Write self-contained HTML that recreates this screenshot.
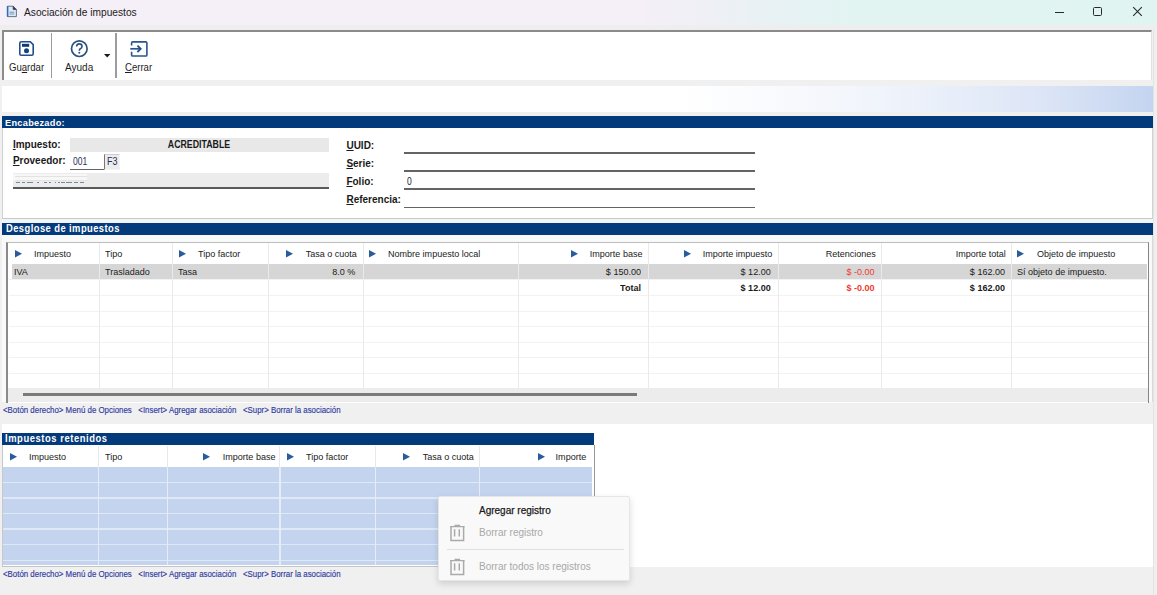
<!DOCTYPE html>
<html><head><meta charset="utf-8">
<style>
*{margin:0;padding:0;box-sizing:border-box}
html,body{width:1157px;height:595px;overflow:hidden;background:#f0f0f0;font-family:"Liberation Sans",sans-serif;color:#1a1a1a;position:relative}
.a{position:absolute}
.t{position:absolute;white-space:nowrap;line-height:1;color:#1a1a1a}
u{text-decoration:underline;text-underline-offset:1px}
svg{display:block}
</style></head><body>
<div class="a" style="left:0.0px;top:0.0px;width:1157.0px;height:25.0px;background:linear-gradient(90deg,#f5eff7 0px,#f5eff7 640px,#e9f1f4 760px,#e1f4f2 860px,#e0f4f2 1157px)"></div>
<div class="a" style="left:0.0px;top:25.0px;width:1157.0px;height:5.0px;background:#eeeeee"></div>
<svg class="a" style="left:6px;top:5px" width="12" height="13" viewBox="0 0 12 13"><path d="M1.5 1.2H7.2L10.4 4.4V11.6H1.5Z" fill="#dde9f6" stroke="#55657a" stroke-width="0.9"/><path d="M1.6 1.2V11.6" stroke="#2f6db4" stroke-width="1.6"/><path d="M7.2 1.2V4.4H10.4" fill="#3a3a48" stroke="#3a3a48" stroke-width="0.8"/><path d="M3.6 7.2H8.2M3.6 9H8.2" stroke="#5a7fae" stroke-width="0.8"/></svg>
<div class="t" style="left:24.0px;top:8.37px;font-size:10.2px;color:#1c1c1c">Asociación de impuestos</div>
<div class="a" style="left:1055.0px;top:12.0px;width:8.5px;height:1.1px;background:#2a2a2a"></div>
<div class="a" style="left:1093.3px;top:7.2px;width:8.8px;height:8.8px;border:1.15px solid #2a2a2a;border-radius:1.6px"></div>
<svg class="a" style="left:1132px;top:6px" width="11" height="11" viewBox="0 0 11 11"><path d="M1.2 1.2L9.8 9.8M9.8 1.2L1.2 9.8" stroke="#2a2a2a" stroke-width="1.1"/></svg>
<div class="a" style="left:2.0px;top:30.0px;width:1150.0px;height:50.0px;background:#fff;border-top:2px solid #8a8a8a;border-left:2px solid #8c8c8c;border-right:1px solid #e0e0e0"></div>
<div class="a" style="left:50.6px;top:33.0px;width:1.8px;height:45.0px;background:#9c9c9c"></div>
<div class="a" style="left:115.0px;top:33.0px;width:1.8px;height:45.0px;background:#9c9c9c"></div>
<svg class="a" style="left:19px;top:41px" width="15" height="15" viewBox="0 0 15 15"><path d="M2.2 0.8H11.3L14.2 3.7V12.8Q14.2 14.2 12.8 14.2H2.2Q0.8 14.2 0.8 12.8V2.2Q0.8 0.8 2.2 0.8Z" fill="#fff" stroke="#1f4f8c" stroke-width="1.6"/><rect x="3" y="2.8" width="7.2" height="3" fill="#0e3a78"/><circle cx="7.5" cy="9.8" r="2.5" fill="#12437f"/></svg>
<div class="t" style="left:8.7px;top:62.29px;font-size:11px;transform:scaleX(0.87);transform-origin:left top;color:#1e1e1e">Gu<u>a</u>rdar</div>
<svg class="a" style="left:70px;top:40px" width="19" height="18" viewBox="0 0 19 18"><circle cx="9.3" cy="8.7" r="7.8" fill="none" stroke="#2b527f" stroke-width="1.7"/><path d="M6.6 6.6Q6.6 3.9 9.3 3.9Q12 3.9 12 6.4Q12 7.9 10.3 8.8Q9.3 9.4 9.3 10.8" fill="none" stroke="#2b527f" stroke-width="1.6"/><circle cx="9.3" cy="12.8" r="1" fill="#2b527f"/></svg>
<svg class="a" style="left:104px;top:54px" width="7" height="4" viewBox="0 0 7 4"><path d="M0 0H6.4L3.2 3.6Z" fill="#1a1a1a"/></svg>
<div class="t" style="left:64.5px;top:62.09px;font-size:11px;transform:scaleX(0.91);transform-origin:left top;color:#1e1e1e">Ayuda</div>
<svg class="a" style="left:130px;top:41px" width="18" height="16" viewBox="0 0 18 16"><path d="M1.6 4.6V2Q1.6 0.9 2.7 0.9H15.8Q16.9 0.9 16.9 2V13.9Q16.9 15 15.8 15H2.7Q1.6 15 1.6 13.9V10.8" fill="none" stroke="#2a5590" stroke-width="1.6"/><path d="M0.3 7.8H10.2" stroke="#2a5590" stroke-width="1.7"/><path d="M7.4 4.6L10.7 7.8L7.4 11" fill="none" stroke="#1f4f8c" stroke-width="1.8"/></svg>
<div class="t" style="left:125.2px;top:62.09px;font-size:11px;transform:scaleX(0.87);transform-origin:left top;color:#1e1e1e"><u>C</u>errar</div>
<div class="a" style="left:2.0px;top:80.0px;width:1151.0px;height:6.0px;background:#f0f0f0"></div>
<div class="a" style="left:2.0px;top:86.0px;width:1151.0px;height:26.0px;background:linear-gradient(90deg,#fff 0px,#fff 680px,#f3f6fc 850px,#e8eef9 950px,#dbe4f6 1050px,#c4d4f0 1151px)"></div>
<div class="a" style="left:2.0px;top:116.0px;width:1151.0px;height:12.0px;background:#033a7c"></div>
<div class="t" style="left:5.2px;top:118.20px;font-size:9.8px;transform:scaleX(0.94);transform-origin:left top;color:#fff;font-weight:bold;letter-spacing:0.3px">Encabezado:</div>
<div class="a" style="left:2.0px;top:217.0px;width:1151.0px;height:5.5px;background:#f1f4f8"></div>
<div class="a" style="left:2.0px;top:128.0px;width:1151.0px;height:90.5px;background:#fff;border:1px solid #d2d2d2;border-bottom:1.5px solid #c8c8c8;border-top:none"></div>
<div class="t" style="left:12.9px;top:140.13px;font-size:10px;font-weight:bold;color:#1a1a1a"><u>I</u>mpuesto:</div>
<div class="a" style="left:69.7px;top:138.0px;width:259.1px;height:13.7px;background:#e8e8e8"></div>
<div class="t" style="left:-1.0px;width:400px;text-align:center;top:140.23px;font-size:10px;transform:scaleX(0.88);transform-origin:center top;font-weight:bold;color:#1a1a1a">ACREDITABLE</div>
<div class="t" style="left:12.9px;top:156.44px;font-size:10px;font-weight:bold;color:#1a1a1a"><u>P</u>roveedor:</div>
<div class="a" style="left:69.7px;top:153.0px;width:34.8px;height:17.0px;background:#fff;border-bottom:1.6px solid #646464"></div>
<div class="t" style="left:72.7px;top:157.03px;font-size:10px;transform:scaleX(0.85);transform-origin:left top;color:#1f2f55">001</div>
<div class="a" style="left:103.6px;top:154.3px;width:16.3px;height:15.7px;background:#ececec;border-top:1px solid #cdcdcd;border-left:1.4px solid #777;border-right:1px solid #f4f4f4;border-bottom:1px solid #f4f4f4"></div>
<div class="t" style="left:106.8px;top:157.03px;font-size:10px;transform:scaleX(0.9);transform-origin:left top;color:#1f2f55">F3</div>
<div class="a" style="left:12.6px;top:173.3px;width:316.2px;height:15.3px;background:#ececec;border-bottom:2px solid #5a5a5a"></div>
<div class="a" style="left:13.2px;top:173.6px;width:74.3px;height:7.9px;background:#f7f7f7"></div>
<div class="a" style="left:14.5px;top:176.0px;width:72.0px;height:1.0px;background:#e2e2e2"></div>
<div class="a" style="left:14.5px;top:179.6px;width:72.0px;height:1.0px;background:#e4e4e4"></div>
<div class="a" style="left:15.5px;top:181.8px;width:4.4px;height:1.6px;background:#7886a6"></div>
<div class="a" style="left:21.5px;top:181.8px;width:3.2px;height:1.6px;background:#7886a6"></div>
<div class="a" style="left:27.0px;top:181.8px;width:6.4px;height:1.6px;background:#7886a6"></div>
<div class="a" style="left:37.0px;top:181.8px;width:2.4px;height:1.6px;background:#7886a6"></div>
<div class="a" style="left:43.8px;top:181.8px;width:3.2px;height:1.6px;background:#7886a6"></div>
<div class="a" style="left:49.0px;top:181.8px;width:2.3px;height:1.6px;background:#7886a6"></div>
<div class="a" style="left:54.5px;top:181.8px;width:1.2px;height:1.6px;background:#7886a6"></div>
<div class="a" style="left:57.7px;top:181.8px;width:2.0px;height:1.6px;background:#7886a6"></div>
<div class="a" style="left:61.3px;top:181.8px;width:3.5px;height:1.6px;background:#7886a6"></div>
<div class="a" style="left:66.0px;top:181.8px;width:6.0px;height:1.6px;background:#7886a6"></div>
<div class="a" style="left:73.6px;top:181.8px;width:4.0px;height:1.6px;background:#7886a6"></div>
<div class="a" style="left:79.5px;top:181.8px;width:4.0px;height:1.6px;background:#7886a6"></div>
<div class="t" style="left:346.4px;top:140.73px;font-size:10px;font-weight:bold;color:#1a1a1a"><u>U</u>UID:</div>
<div class="a" style="left:404.3px;top:152.2px;width:351.0px;height:1.6px;background:#646464"></div>
<div class="t" style="left:346.4px;top:159.03px;font-size:10px;font-weight:bold;color:#1a1a1a"><u>S</u>erie:</div>
<div class="a" style="left:404.3px;top:170.3px;width:351.0px;height:1.6px;background:#646464"></div>
<div class="t" style="left:346.4px;top:176.83px;font-size:10px;font-weight:bold;color:#1a1a1a"><u>F</u>olio:</div>
<div class="a" style="left:404.3px;top:188.3px;width:351.0px;height:1.6px;background:#646464"></div>
<div class="t" style="left:346.4px;top:195.03px;font-size:10px;font-weight:bold;color:#1a1a1a"><u>R</u>eferencia:</div>
<div class="a" style="left:404.3px;top:206.8px;width:351.0px;height:1.6px;background:#646464"></div>
<div class="t" style="left:407.3px;top:177.13px;font-size:10px;transform:scaleX(0.85);transform-origin:left top;color:#1a1a1a">0</div>
<div class="a" style="left:2.0px;top:222.5px;width:1151.0px;height:12.0px;background:#033a7c"></div>
<div class="t" style="left:5.6px;top:224.44px;font-size:10px;transform:scaleX(0.94);transform-origin:left top;color:#fff;font-weight:bold;letter-spacing:0.45px">Desglose de impuestos</div>
<div class="a" style="left:2.0px;top:234.5px;width:1150.5px;height:167.5px;background:#f9f9f9;border-right:1px solid #dadada"></div>
<div class="a" style="left:6.0px;top:241.5px;width:1143.2px;height:161.0px;background:#fff;border-top:1.5px solid #bdbdbd;border-left:2px solid #8a8a8a;border-right:1.2px solid #858585"></div>
<div class="a" style="left:11.8px;top:263.9px;width:1135.2px;height:15.1px;background:#d6d6d6"></div>
<div class="a" style="left:8.5px;top:294.9px;width:1139.5px;height:1.0px;background:#f2f2f2"></div>
<div class="a" style="left:8.5px;top:310.5px;width:1139.5px;height:1.0px;background:#f2f2f2"></div>
<div class="a" style="left:8.5px;top:326.1px;width:1139.5px;height:1.0px;background:#f2f2f2"></div>
<div class="a" style="left:8.5px;top:341.6px;width:1139.5px;height:1.0px;background:#f2f2f2"></div>
<div class="a" style="left:8.5px;top:357.2px;width:1139.5px;height:1.0px;background:#f2f2f2"></div>
<div class="a" style="left:8.5px;top:372.8px;width:1139.5px;height:1.0px;background:#f2f2f2"></div>
<div class="a" style="left:8.5px;top:279.1px;width:1139.5px;height:1.0px;background:#f2f2f2"></div>
<div class="a" style="left:98.5px;top:243.3px;width:1.0px;height:145.0px;background:#eaeaea"></div>
<div class="a" style="left:172.0px;top:243.3px;width:1.0px;height:145.0px;background:#eaeaea"></div>
<div class="a" style="left:267.5px;top:243.3px;width:1.0px;height:145.0px;background:#eaeaea"></div>
<div class="a" style="left:362.6px;top:243.3px;width:1.0px;height:145.0px;background:#eaeaea"></div>
<div class="a" style="left:518.0px;top:243.3px;width:1.0px;height:145.0px;background:#eaeaea"></div>
<div class="a" style="left:647.6px;top:243.3px;width:1.0px;height:145.0px;background:#eaeaea"></div>
<div class="a" style="left:777.5px;top:243.3px;width:1.0px;height:145.0px;background:#eaeaea"></div>
<div class="a" style="left:881.0px;top:243.3px;width:1.0px;height:145.0px;background:#eaeaea"></div>
<div class="a" style="left:1011.0px;top:243.3px;width:1.0px;height:145.0px;background:#eaeaea"></div>
<div class="a" style="left:8.0px;top:388.3px;width:1140.2px;height:13.7px;background:#ececec"></div>
<div class="a" style="left:23.0px;top:393.4px;width:614.0px;height:2.4px;background:#7a7a7a"></div>
<svg class="a" style="left:14.5px;top:249.5px" width="8" height="8" viewBox="0 0 8 8"><path d="M0 0L7 3.75L0 7.5Z" fill="#2a5c9c"/></svg>
<div class="t" style="left:33.6px;top:249.26px;font-size:9.5px;transform:scaleX(0.95);transform-origin:left top;">Impuesto</div>
<div class="t" style="left:104.5px;top:249.26px;font-size:9.5px;transform:scaleX(0.95);transform-origin:left top;">Tipo</div>
<svg class="a" style="left:179.0px;top:249.5px" width="8" height="8" viewBox="0 0 8 8"><path d="M0 0L7 3.75L0 7.5Z" fill="#2a5c9c"/></svg>
<div class="t" style="left:198.3px;top:249.26px;font-size:9.5px;transform:scaleX(0.95);transform-origin:left top;">Tipo factor</div>
<svg class="a" style="left:285.5px;top:249.5px" width="8" height="8" viewBox="0 0 8 8"><path d="M0 0L7 3.75L0 7.5Z" fill="#2a5c9c"/></svg>
<div class="t" style="right:800.6px;top:249.26px;font-size:9.5px;transform:scaleX(0.95);transform-origin:right top;">Tasa o cuota</div>
<svg class="a" style="left:369.0px;top:249.5px" width="8" height="8" viewBox="0 0 8 8"><path d="M0 0L7 3.75L0 7.5Z" fill="#2a5c9c"/></svg>
<div class="t" style="left:388.0px;top:249.26px;font-size:9.5px;transform:scaleX(0.95);transform-origin:left top;">Nombre impuesto local</div>
<svg class="a" style="left:570.5px;top:249.5px" width="8" height="8" viewBox="0 0 8 8"><path d="M0 0L7 3.75L0 7.5Z" fill="#2a5c9c"/></svg>
<div class="t" style="right:515.0px;top:249.26px;font-size:9.5px;transform:scaleX(0.95);transform-origin:right top;">Importe base</div>
<svg class="a" style="left:683.8px;top:249.5px" width="8" height="8" viewBox="0 0 8 8"><path d="M0 0L7 3.75L0 7.5Z" fill="#2a5c9c"/></svg>
<div class="t" style="right:384.4px;top:249.26px;font-size:9.5px;transform:scaleX(0.95);transform-origin:right top;">Importe impuesto</div>
<div class="t" style="right:281.5px;top:249.26px;font-size:9.5px;transform:scaleX(0.95);transform-origin:right top;">Retenciones</div>
<div class="t" style="right:151.3px;top:249.26px;font-size:9.5px;transform:scaleX(0.95);transform-origin:right top;">Importe total</div>
<svg class="a" style="left:1017.0px;top:249.5px" width="8" height="8" viewBox="0 0 8 8"><path d="M0 0L7 3.75L0 7.5Z" fill="#2a5c9c"/></svg>
<div class="t" style="left:1036.8px;top:249.26px;font-size:9.5px;transform:scaleX(0.95);transform-origin:left top;">Objeto de impuesto</div>
<div class="t" style="left:13.6px;top:267.26px;font-size:9.5px;transform:scaleX(0.95);transform-origin:left top;">IVA</div>
<div class="t" style="left:104.5px;top:267.26px;font-size:9.5px;transform:scaleX(0.95);transform-origin:left top;">Trasladado</div>
<div class="t" style="left:177.7px;top:267.26px;font-size:9.5px;transform:scaleX(0.95);transform-origin:left top;">Tasa</div>
<div class="t" style="right:802.0px;top:267.26px;font-size:9.5px;transform:scaleX(0.95);transform-origin:right top;">8.0 %</div>
<div class="t" style="right:516.5px;top:267.26px;font-size:9.5px;transform:scaleX(0.95);transform-origin:right top;">$ 150.00</div>
<div class="t" style="right:386.7px;top:267.26px;font-size:9.5px;transform:scaleX(0.95);transform-origin:right top;">$ 12.00</div>
<div class="t" style="right:282.6px;top:267.26px;font-size:9.5px;transform:scaleX(0.95);transform-origin:right top;color:#f03a2e">$ -0.00</div>
<div class="t" style="right:152.5px;top:267.26px;font-size:9.5px;transform:scaleX(0.95);transform-origin:right top;">$ 162.00</div>
<div class="t" style="left:1016.5px;top:267.26px;font-size:9.5px;transform:scaleX(0.95);transform-origin:left top;">Sí objeto de impuesto.</div>
<div class="t" style="right:516.5px;top:282.86px;font-size:9.5px;transform:scaleX(0.95);transform-origin:right top;font-weight:bold">Total</div>
<div class="t" style="right:386.7px;top:282.86px;font-size:9.5px;transform:scaleX(0.95);transform-origin:right top;font-weight:bold">$ 12.00</div>
<div class="t" style="right:282.6px;top:282.86px;font-size:9.5px;transform:scaleX(0.95);transform-origin:right top;font-weight:bold;color:#f03a2e">$ -0.00</div>
<div class="t" style="right:152.5px;top:282.86px;font-size:9.5px;transform:scaleX(0.95);transform-origin:right top;font-weight:bold">$ 162.00</div>
<div class="t" style="left:3.0px;top:405.58px;font-size:9px;transform:scaleX(0.875);transform-origin:left top;color:#2f3aa0;-webkit-text-stroke:0.15px #2f3aa0">&lt;Botón derecho&gt; Menú de Opciones&nbsp;&nbsp; &lt;Insert&gt; Agregar asociación&nbsp;&nbsp; &lt;Supr&gt; Borrar la asociación</div>
<div class="a" style="left:2.0px;top:424.0px;width:1151.0px;height:143.0px;background:#fff"></div>
<div class="a" style="left:2.0px;top:432.7px;width:592.0px;height:12.3px;background:#033a7c"></div>
<div class="t" style="left:5.0px;top:434.44px;font-size:10px;transform:scaleX(0.94);transform-origin:left top;color:#fff;font-weight:bold;letter-spacing:0.6px">Impuestos retenidos</div>
<div class="a" style="left:2.0px;top:445.0px;width:592.6px;height:121.6px;background:#fff;border-left:1px solid #c8c8c8;border-right:1.6px solid #989898;border-bottom:1.5px solid #c4c4c4"></div>
<div class="a" style="left:3.0px;top:466.6px;width:589.2px;height:98.6px;background:#c4d4ef"></div>
<div class="a" style="left:3.0px;top:481.5px;width:589.2px;height:1.5px;background:#dfe8f7"></div>
<div class="a" style="left:3.0px;top:497.2px;width:589.2px;height:1.5px;background:#dfe8f7"></div>
<div class="a" style="left:3.0px;top:512.8px;width:589.2px;height:1.5px;background:#dfe8f7"></div>
<div class="a" style="left:3.0px;top:528.3px;width:589.2px;height:1.5px;background:#dfe8f7"></div>
<div class="a" style="left:3.0px;top:543.8px;width:589.2px;height:1.5px;background:#dfe8f7"></div>
<div class="a" style="left:3.0px;top:559.5px;width:589.2px;height:1.5px;background:#dfe8f7"></div>
<div class="a" style="left:98.0px;top:445.5px;width:1.0px;height:21.1px;background:#e8e8e8"></div>
<div class="a" style="left:98.0px;top:466.6px;width:1.2px;height:98.6px;background:#e4ecf8"></div>
<div class="a" style="left:167.2px;top:445.5px;width:1.0px;height:21.1px;background:#e8e8e8"></div>
<div class="a" style="left:167.2px;top:466.6px;width:1.2px;height:98.6px;background:#e4ecf8"></div>
<div class="a" style="left:279.4px;top:445.5px;width:1.0px;height:21.1px;background:#e8e8e8"></div>
<div class="a" style="left:279.4px;top:466.6px;width:1.2px;height:98.6px;background:#e4ecf8"></div>
<div class="a" style="left:374.6px;top:445.5px;width:1.0px;height:21.1px;background:#e8e8e8"></div>
<div class="a" style="left:374.6px;top:466.6px;width:1.2px;height:98.6px;background:#e4ecf8"></div>
<div class="a" style="left:478.6px;top:445.5px;width:1.0px;height:21.1px;background:#e8e8e8"></div>
<div class="a" style="left:478.6px;top:466.6px;width:1.2px;height:98.6px;background:#e4ecf8"></div>
<svg class="a" style="left:10.3px;top:453.3px" width="8" height="8" viewBox="0 0 8 8"><path d="M0 0L7 3.75L0 7.5Z" fill="#2a5c9c"/></svg>
<div class="t" style="left:29.0px;top:452.26px;font-size:9.5px;transform:scaleX(0.95);transform-origin:left top;">Impuesto</div>
<div class="t" style="left:105.3px;top:452.26px;font-size:9.5px;transform:scaleX(0.95);transform-origin:left top;">Tipo</div>
<svg class="a" style="left:202.8px;top:453.3px" width="8" height="8" viewBox="0 0 8 8"><path d="M0 0L7 3.75L0 7.5Z" fill="#2a5c9c"/></svg>
<div class="t" style="right:882.0px;top:452.26px;font-size:9.5px;transform:scaleX(0.95);transform-origin:right top;">Importe base</div>
<svg class="a" style="left:287.0px;top:453.3px" width="8" height="8" viewBox="0 0 8 8"><path d="M0 0L7 3.75L0 7.5Z" fill="#2a5c9c"/></svg>
<div class="t" style="left:306.0px;top:452.26px;font-size:9.5px;transform:scaleX(0.95);transform-origin:left top;">Tipo factor</div>
<svg class="a" style="left:402.6px;top:453.3px" width="8" height="8" viewBox="0 0 8 8"><path d="M0 0L7 3.75L0 7.5Z" fill="#2a5c9c"/></svg>
<div class="t" style="right:683.0px;top:452.26px;font-size:9.5px;transform:scaleX(0.95);transform-origin:right top;">Tasa o cuota</div>
<svg class="a" style="left:538.0px;top:453.3px" width="8" height="8" viewBox="0 0 8 8"><path d="M0 0L7 3.75L0 7.5Z" fill="#2a5c9c"/></svg>
<div class="t" style="right:571.0px;top:452.26px;font-size:9.5px;transform:scaleX(0.95);transform-origin:right top;">Importe</div>
<div class="t" style="left:3.0px;top:570.18px;font-size:9px;transform:scaleX(0.875);transform-origin:left top;color:#2f3aa0;-webkit-text-stroke:0.15px #2f3aa0">&lt;Botón derecho&gt; Menú de Opciones&nbsp;&nbsp; &lt;Insert&gt; Agregar asociación&nbsp;&nbsp; &lt;Supr&gt; Borrar la asociación</div>
<div class="a" style="left:1153.0px;top:30.0px;width:4.0px;height:565.0px;background:#efefef;border-left:1px solid #e4e4e4"></div>
<div class="a" style="left:438.2px;top:496.4px;width:192.3px;height:84.4px;background:#f9f9f9;border:1px solid #e6e6e6;border-radius:2px;box-shadow:0 3px 7px rgba(0,0,0,0.14)"></div>
<div class="t" style="left:479.0px;top:505.74px;font-size:10px;color:#1a1a1a;-webkit-text-stroke:0.25px #1a1a1a">Agregar registro</div>
<div class="t" style="left:479.0px;top:528.43px;font-size:10px;color:#a8a8a8">Borrar registro</div>
<div class="a" style="left:447.0px;top:549.3px;width:177.0px;height:1.0px;background:#dedede"></div>
<div class="t" style="left:479.0px;top:562.03px;font-size:10px;color:#a8a8a8">Borrar todos los registros</div>
<svg class="a" style="left:449px;top:524px" width="17" height="18" viewBox="0 0 17 18"><path d="M1 2.6H15.6M6.2 2.4V1.4H10.4V2.4" fill="none" stroke="#aaaaaa" stroke-width="1.4"/><path d="M2 2.6V16.6H14.6V2.6" fill="none" stroke="#aaaaaa" stroke-width="1.5"/><path d="M5.6 5.2V12.6M10.3 5.2V12.6" stroke="#aaaaaa" stroke-width="1.5"/></svg>
<svg class="a" style="left:449px;top:557.8px" width="17" height="18" viewBox="0 0 17 18"><path d="M1 2.6H15.6M6.2 2.4V1.4H10.4V2.4" fill="none" stroke="#aaaaaa" stroke-width="1.4"/><path d="M2 2.6V16.6H14.6V2.6" fill="none" stroke="#aaaaaa" stroke-width="1.5"/><path d="M5.6 5.2V12.6M10.3 5.2V12.6" stroke="#aaaaaa" stroke-width="1.5"/></svg>
</body></html>
